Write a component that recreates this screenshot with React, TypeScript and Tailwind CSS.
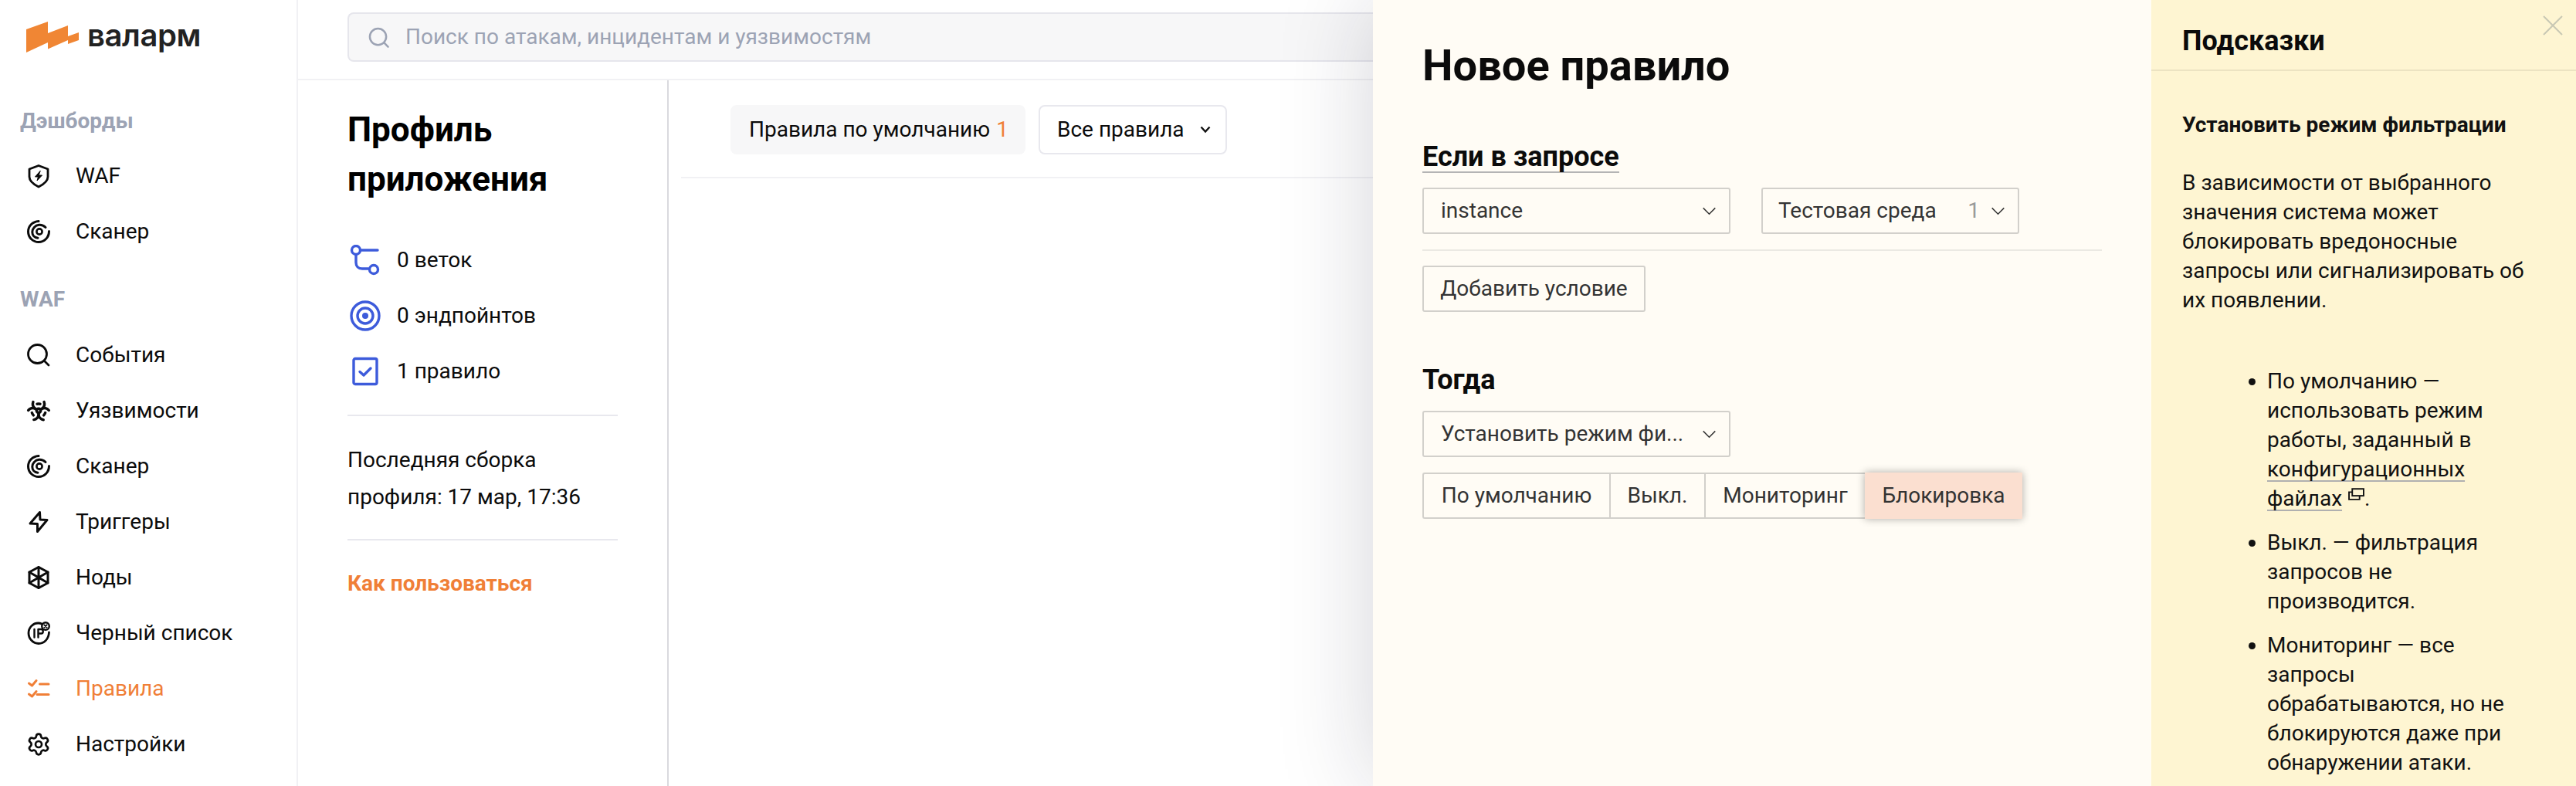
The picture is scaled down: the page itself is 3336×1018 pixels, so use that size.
import React from "react";
import { Settings, Biohazard } from "lucide-react";

const Ic = ({ children, className = "" }: { children: React.ReactNode; className?: string }) => (
  <svg viewBox="0 0 32 32" width="32" height="32" fill="none" stroke="currentColor" strokeWidth="2.8" strokeLinecap="round" strokeLinejoin="round" className={className}>
    {children}
  </svg>
);

const ShieldBolt = () => (
  <Ic>
    <path d="M16 2.5 L28 7 V17 C28 23 22 27 16 30 C10 27 4 23 4 17 V7 Z" />
    <path d="M18 9.5 L11.5 17 H15.5 L14 22 L20.5 15 H16.5 Z" fill="currentColor" strokeWidth="1" />
  </Ic>
);
const Scan = () => (
  <Ic>
    <path d="M16 2.5 C8 3 2.5 9 2.5 16 C2.5 24 9 29.5 16 29.5 C23.5 29.5 29.5 23.5 29.5 15.5" strokeWidth="3" />
    <path d="M25 10.5 C22.5 8 19.5 7 16.5 7.3 C11.5 7.8 7.8 12 7.8 16.5 C7.8 20.5 10.5 23.8 15 24.2" strokeWidth="3" />
    <circle cx="17" cy="16" r="3.6" strokeWidth="2.6" />
  </Ic>
);
const Search = () => (
  <Ic>
    <circle cx="14.5" cy="14.5" r="12" />
    <path d="M24 24 L29 29" />
  </Ic>
);
const Trigger = () => (
  <Ic>
    <path d="M17.5 3.5 L5 18 L14.5 18.5 L14.5 28.5 L27 13.5 L18 13 Z" strokeWidth="3" />
  </Ic>
);
const Hex = () => (
  <Ic>
    <path d="M16 2.5 L28 9 V23 L16 29.5 L4 23 V9 Z" strokeWidth="3" />
    <path d="M16 2.5 V29.5 M4 9 L28 23 M28 9 L4 23" strokeWidth="3" />
  </Ic>
);
const IpIcon = () => (
  <Ic>
    <path d="M20 4 C18.5 3.2 17 3 15.5 3 C8.5 3 3 9 3 16 C3 23.5 9 29.5 16 29.5 C23 29.5 29 24 29.5 15" />
    <path d="M10.5 11 V21.5 M15.5 21.5 V11 H19.5 C22.5 11 22.5 16.5 19.5 16.5 H15.5" strokeWidth="2.4" />
    <circle cx="25" cy="7" r="4.8" strokeWidth="2.4" />
    <path d="M23.3 5.3 L26.7 8.7 M26.7 5.3 L23.3 8.7" strokeWidth="1.8" />
  </Ic>
);
const Rules = () => (
  <Ic>
    <path d="M3.5 9 L7.5 12 L13 5.5 M3.5 23 L7.5 26 L13 19.5" strokeWidth="3" />
    <path d="M17.5 10 H29 M14 23.5 H29" strokeWidth="3" />
  </Ic>
);

const Nav = ({ icon, label, active }: { icon: React.ReactNode; label: string; active?: boolean }) => (
  <div className={`flex h-[72px] items-center pl-[34px] ${active ? "text-[#f07f37]" : "text-[#0b0b0b]"}`}>
    <span className="flex w-[32px] justify-center">{icon}</span>
    <span className="ml-[32px] text-[28px] leading-[40px]">{label}</span>
  </div>
);

const Chevron = () => (
  <svg viewBox="0 0 20 12" width="19" height="11" fill="none" stroke="#333" strokeWidth="1.6">
    <path d="M1.5 1.5 L10 10 L18.5 1.5" />
  </svg>
);

const Select = ({ w, children }: { w: string; children: React.ReactNode }) => (
  <div className={`flex h-[60px] ${w} items-center rounded-[3px] border-2 border-[#d2d0cb] pl-[22px] pr-[16px] text-[28px] text-[#333]`}>
    {children}
  </div>
);

const Seg = ({ w, label, active }: { w: string; label: string; active?: boolean }) => (
  <div
    className={`flex h-[60px] ${w} items-center justify-center text-[28px] text-[#333] ${active ? "relative bg-[#fbdfd0] shadow-[0_0_10px_rgba(0,0,0,0.32)]" : "border-y-2 border-l-2 border-[#d2d0cb]"}`}
  >
    {label}
  </div>
);

export default function App() {
  return (
    <div className="relative flex h-[1018px] w-[3336px] overflow-hidden bg-white font-['Roboto',sans-serif]">
      {/* sidebar */}
      <aside className="h-full w-[386px] shrink-0 border-r-2 border-[#f1f1f4]">
        <div className="flex h-[103px] items-start pl-[34px] pt-[28px]">
          <svg viewBox="0 0 68 40" width="68" height="40" className="shrink-0">
            <path d="M0 10 L28 0 V15 L54 5 V19 L68 14 V24 L54 29 V24 L28 35.5 V27 L0 40 Z" fill="#f08634" />
          </svg>
          <span className="ml-[11px] mt-[-8px] font-['Inter',sans-serif] text-[40px] font-semibold leading-[52px] tracking-[-0.4px] text-[#222]">валарм</span>
        </div>
        <div className="pt-[34px]">
          <div className="pl-[26px] text-[28px] font-bold leading-[40px] text-[#9ca3b4]">Дэшборды</div>
          <div className="pt-[15px]">
            <Nav icon={<ShieldBolt />} label="WAF" />
            <Nav icon={<Scan />} label="Сканер" />
          </div>
          <div className="pl-[26px] pt-[32px] text-[28px] font-bold leading-[40px] text-[#9ca3b4]">WAF</div>
          <div className="pt-[16px]">
            <Nav icon={<Search />} label="События" />
            <Nav icon={<Biohazard size={32} strokeWidth={2.6} />} label="Уязвимости" />
            <Nav icon={<Scan />} label="Сканер" />
            <Nav icon={<Trigger />} label="Триггеры" />
            <Nav icon={<Hex />} label="Ноды" />
            <Nav icon={<IpIcon />} label="Черный список" />
            <Nav icon={<Rules />} label="Правила" active />
            <Nav icon={<Settings size={34} strokeWidth={2} />} label="Настройки" />
          </div>
        </div>
      </aside>

      {/* main */}
      <div className="flex min-w-0 flex-1 flex-col">
        <header className="flex h-[104px] shrink-0 items-start border-b-2 border-[#f1f1f4] pl-[64px] pt-[16px]">
          <div className="flex h-[64px] w-full items-center rounded-l-[8px] border-2 border-r-0 border-[#e6e6ec] bg-[#f7f7f8] pl-[25px] text-[#9ca3b4]">
            <svg viewBox="0 0 28 28" width="27" height="27" fill="none" stroke="currentColor" strokeWidth="2.6" strokeLinecap="round">
              <circle cx="13" cy="13" r="11" />
              <path d="M21.5 21.5 L26.5 26.5" />
            </svg>
            <span className="ml-[21px] text-[28px]">Поиск по атакам, инцидентам и уязвимостям</span>
          </div>
        </header>
        <div className="flex min-h-0 flex-1">
          <section className="w-[480px] shrink-0 border-r-2 border-[#d9d9de] pl-[64px] pr-[64px] pt-[32px]">
            <h1 className="text-[44px] font-bold leading-[64px] text-black">Профиль приложения</h1>
            <div className="pt-[37px] text-[28px] text-[#0b0b0b]">
              <div className="flex h-[72px] items-center gap-[21px] pl-[3px]">
                <svg viewBox="0 0 40 40" width="40" height="40" fill="none" stroke="#3d5bdb" strokeWidth="3.4" strokeLinecap="round" className="shrink-0">
                  <circle cx="8" cy="7" r="5.5" />
                  <path d="M14 7 H36" />
                  <path d="M8 13 V23 C8 28 11 31 16 31 H24" />
                  <circle cx="31" cy="32" r="5.5" />
                </svg>
                <span>0 веток</span>
              </div>
              <div className="flex h-[72px] items-center gap-[21px] pl-[3px]">
                <svg viewBox="0 0 40 40" width="40" height="40" fill="none" stroke="#3d5bdb" strokeWidth="3.4" className="shrink-0">
                  <circle cx="20" cy="20" r="18" />
                  <circle cx="20" cy="20" r="10" />
                  <circle cx="20" cy="20" r="4" fill="#3d5bdb" stroke="none" />
                </svg>
                <span>0 эндпойнтов</span>
              </div>
              <div className="flex h-[72px] items-center gap-[21px] pl-[3px]">
                <svg viewBox="0 0 40 40" width="40" height="40" fill="none" stroke="#3d5bdb" strokeWidth="3.4" strokeLinejoin="round" strokeLinecap="round" className="shrink-0">
                  <rect x="5" y="3.5" width="30" height="33" rx="2" />
                  <path d="M13 20.5 L18 25 L27 16" />
                </svg>
                <span>1 правило</span>
              </div>
            </div>
            <div className="mt-[20px] border-t-2 border-[#e8e8ee] pb-[30px] pt-[33px] text-[28px] leading-[48px] text-[#0b0b0b]">
              Последняя сборка профиля: 17 мар, 17:36
            </div>
            <div className="border-t-2 border-[#e8e8ee] pt-[36px] text-[28px] font-bold leading-[40px] text-[#f07f37]">Как пользоваться</div>
          </section>
          <section className="min-w-0 flex-1">
            <div className="ml-[16px] flex h-[127px] items-start gap-[17px] border-b-2 border-[#f1f1f4] pl-[64px] pt-[32px]">
              <div className="flex h-[64px] w-[382px] items-center rounded-[8px] bg-[#f7f7f8] pl-[24px] text-[28px] text-[#0b0b0b]">
                Правила по умолчанию<span className="ml-[8px] text-[#f07f37]">1</span>
              </div>
              <div className="flex h-[64px] w-[244px] items-center rounded-[8px] border-2 border-[#e8e8ee] pl-[22px] text-[28px] text-[#0b0b0b]">
                Все правила
                <svg viewBox="0 0 14 10" width="14" height="10" fill="none" stroke="#111" strokeWidth="2.4" className="ml-[20px]">
                  <path d="M1.5 1.5 L7 7.5 L12.5 1.5" />
                </svg>
              </div>
            </div>
          </section>
        </div>
      </div>

      {/* drawer over the page */}
      <div className="absolute inset-y-0 right-0 flex w-[1558px] bg-[#fffcf5] shadow-[0_0_116px_rgba(20,20,50,0.18)]">
        <div className="w-[1008px] shrink-0 pl-[64px] pr-[64px]">
          <h2 className="pt-[50px] text-[56px] font-bold leading-[70px] text-[#0b0b0b]">Новое правило</h2>
          <div className="flex pt-[64px]">
            <span className="border-b-2 border-[#b4b4b4] text-[36px] font-bold leading-[38px] text-[#0b0b0b]">Если в запросе</span>
          </div>
          <div className="flex gap-[40px] pt-[19px]">
            <Select w="w-[399px]">
              <span className="flex-1">instance</span>
              <Chevron />
            </Select>
            <Select w="w-[334px]">
              <span className="-ml-[2px] flex-1">Тестовая среда</span>
              <span className="mr-[14px] text-[#9a9a9a]">1</span>
              <Chevron />
            </Select>
          </div>
          <div className="mt-[20px] border-t-2 border-[#ebe9e3]" />
          <div className="flex pt-[19px]">
            <div className="flex h-[60px] w-[289px] items-center justify-center rounded-[3px] border-2 border-[#d2d0cb] text-[28px] text-[#333]">Добавить условие</div>
          </div>
          <div className="pt-[65px] text-[36px] font-bold leading-[46px] text-[#0b0b0b]">Тогда</div>
          <div className="flex pt-[17px]">
            <Select w="w-[399px]">
              <span className="flex-1">Установить режим фи...</span>
              <Chevron />
            </Select>
          </div>
          <div className="flex pt-[20px]">
            <Seg w="w-[242px] rounded-l-[3px]" label="По умолчанию" />
            <Seg w="w-[123px]" label="Выкл." />
            <Seg w="w-[208px]" label="Мониторинг" />
            <Seg w="w-[204px]" label="Блокировка" active />
          </div>
        </div>
        <div className="relative min-w-0 flex-1 bg-[#fef5d2] text-[28px] leading-[38px] text-[#111]">
          <svg viewBox="0 0 26 26" width="26" height="26" fill="none" stroke="#c9c8b4" strokeWidth="2" className="absolute right-[17px] top-[20px]">
            <path d="M1 1 L25 25 M25 1 L1 25" />
          </svg>
          <div className="flex h-[92px] items-start border-b-2 border-[#ece3c2] pl-[40px] pt-[30px] text-[36px] font-bold leading-[46px] text-[#0b0b0b]">Подсказки</div>
          <div className="pl-[40px] pr-[51px]">
            <div className="pt-[51px] font-bold">Установить режим фильтрации</div>
            <p className="pt-[37px]">В зависимости от выбранного значения система может блокировать вредоносные запросы или сигнализировать об их появлении.</p>
            <ul className="list-disc pl-[110px] pt-[67px] marker:text-[#111]">
              <li>
                По умолчанию — использовать режим работы, заданный в{" "}
                <span className="underline decoration-[#b0b0b0] decoration-2 underline-offset-[5px] [text-decoration-skip-ink:none]">конфигурационных файлах</span>
                <svg viewBox="0 0 20 15" width="21" height="16" fill="none" stroke="#111" strokeWidth="1.8" className="ml-[8px] inline-block align-[7px]">
                  <rect x="5" y="1" width="14" height="8.5" />
                  <path d="M5 5 H1 V14 H14 V9.5" />
                </svg>
                .
              </li>
              <li className="pt-[19px]">Выкл. — фильтрация запросов не производится.</li>
              <li className="pt-[19px]">Мониторинг — все запросы обрабатываются, но не блокируются даже при обнаружении атаки.</li>
            </ul>
          </div>
        </div>
      </div>
    </div>
  );
}
